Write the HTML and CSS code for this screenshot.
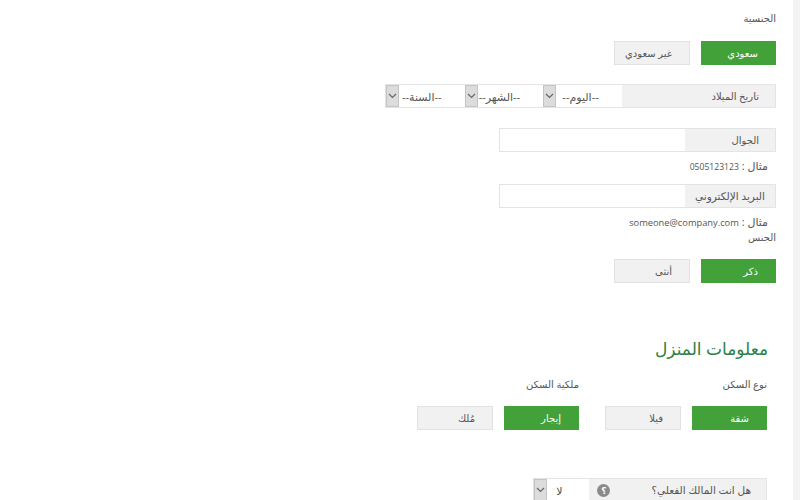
FILE: index.html
```html
<!DOCTYPE html>
<html lang="ar" dir="rtl">
<head>
  <meta charset="UTF-8" />
  <meta name="viewport" content="width=device-width, initial-scale=1.0" />
  <title>معلومات المنزل</title>
  <link rel="stylesheet" href="styles.css">
</head>
<body>

  <aside class="strip"></aside>

  <main class="page">
    <form class="personal">
      <p class="field-title nationality-title">الجنسية</p>
      <div class="toggle">
        <button type="button" class="btn active">سعودي</button>
        <button type="button" class="btn">غير سعودي</button>
      </div>

      <div class="row dob">
        <label class="row-label">تاريخ الميلاد</label>
        <div class="pick">
          <select><option>--اليوم--</option></select>
          <span class="arrow"><svg width="9" height="6" viewBox="0 0 9 6"><path d="M1 1l3.5 3.5L8 1" /></svg></span>
        </div>
        <div class="pick">
          <select><option>--الشهر--</option></select>
          <span class="arrow"><svg width="9" height="6" viewBox="0 0 9 6"><path d="M1 1l3.5 3.5L8 1" /></svg></span>
        </div>
        <div class="pick">
          <select><option>--السنة--</option></select>
          <span class="arrow"><svg width="9" height="6" viewBox="0 0 9 6"><path d="M1 1l3.5 3.5L8 1" /></svg></span>
        </div>
      </div>

      <div class="row contact">
        <label class="row-label" for="mobile">الجوال</label>
        <input type="text" id="mobile" />
      </div>
      <p class="hint">مثال : <span class="latin digits">0505123123</span></p>

      <div class="row contact email">
        <label class="row-label" for="email">البريد الإلكتروني</label>
        <input type="text" id="email" />
      </div>
      <p class="hint">مثال : <span class="latin">someone@company.com</span></p>

      <p class="field-title gender-title">الجنس</p>
      <div class="toggle">
        <button type="button" class="btn active">ذكر</button>
        <button type="button" class="btn">أنثى</button>
      </div>
    </form>

    <section class="house">
      <h2>معلومات المنزل</h2>
      <div class="house-groups">
        <div class="group">
          <p class="field-title">نوع السكن</p>
          <div class="toggle">
            <button type="button" class="btn active">شقة</button>
            <button type="button" class="btn">فيلا</button>
          </div>
        </div>
        <div class="group">
          <p class="field-title">ملكية السكن</p>
          <div class="toggle">
            <button type="button" class="btn active">إيجار</button>
            <button type="button" class="btn">مُلك</button>
          </div>
        </div>
      </div>

      <div class="row owner">
        <label class="row-label">
          هل انت المالك الفعلي؟
          <span class="help">؟</span>
        </label>
        <div class="pick">
          <select><option>لا</option></select>
          <span class="arrow"><svg width="9" height="6" viewBox="0 0 9 6"><path d="M1 1l3.5 3.5L8 1" /></svg></span>
        </div>
      </div>
    </section>
  </main>

</body>
</html>
```

FILE: styles.css
```css
* {
  margin: 0;
  padding: 0;
  box-sizing: border-box;
}

html, body {
  height: 500px;
  overflow: hidden;
}

body {
  display: flex;
  background: #ffffff;
  color: #555555;
  font-family: "Open Sans", "DejaVu Sans", sans-serif;
  font-size: 10px;
}

.strip {
  width: 7px;
  background: #f3f3f3;
}

.page {
  flex: 1;
  padding: 0 17px 0 0;
}

p {
  line-height: 14px;
}

.field-title {
  color: #555555;
}

.nationality-title {
  padding-top: 11px;
  margin-bottom: 16px;
}

.gender-title {
  padding-top: 1px;
  margin-bottom: 15px;
}

.toggle {
  display: flex;
  gap: 11px;
}

.btn {
  width: 76px;
  height: 24px;
  border: 1px solid #e2e2e2;
  background: #f1f1f1;
  color: #555555;
  font-family: inherit;
  font-size: 10px;
  text-align: right;
  padding-right: 17px;
  cursor: pointer;
}

.btn.active {
  width: 75px;
  background: #43a13a;
  border-color: #43a13a;
  color: #ffffff;
}

.row {
  display: flex;
  height: 24px;
  border: 1px solid #e4e4e4;
}

.row-label {
  display: flex;
  align-items: center;
  background: #f1f1f1;
  padding-right: 16px;
  color: #555555;
  font-size: 10px;
}

.dob {
  width: 391px;
  margin-top: 19px;
}

.dob .row-label {
  width: 154px;
}

.pick {
  display: flex;
  width: 79px;
  background: #ffffff;
}

.pick select {
  flex: 1;
  min-width: 0;
  border: none;
  appearance: none;
  background: #ffffff;
  color: #555555;
  font-family: inherit;
  font-size: 11px;
  padding-right: 23px;
}

.arrow {
  display: flex;
  align-items: center;
  justify-content: center;
  width: 13px;
  background: #dcdcdc;
  border: 1px solid #c4c4c4;
}

.arrow path {
  fill: none;
  stroke: #666666;
  stroke-width: 1.2;
}

.contact {
  width: 277px;
  margin-top: 20px;
}

.contact.email {
  margin-top: 11px;
}

.contact .row-label {
  width: 90px;
}

.contact input {
  flex: 1;
  min-width: 0;
  border: none;
  background: #ffffff;
}

.email .row-label {
  padding-right: 0;
  padding-left: 0;
  justify-content: center;
  font-size: 10.5px;
}

.hint {
  padding: 7px 8px 0 0;
  font-size: 11px;
}

.latin {
  font-size: 9.3px;
  line-height: 1;
}

.digits {
  font-size: 8.6px;
}

.house {
  margin-top: 53px;
  padding-right: 9px;
}

.house h2 {
  color: #2d8049;
  font-size: 17px;
  font-weight: normal;
  line-height: 26px;
  margin-right: -1px;
}

.house-groups {
  display: flex;
  gap: 26px;
  margin-top: 15px;
}

.group {
  width: 162px;
}

.group .field-title {
  margin-bottom: 15px;
}

.owner {
  width: 234px;
  margin-top: 48px;
}

.owner .row-label {
  width: 179px;
  gap: 41px;
  padding-right: 15px;
  font-size: 10.5px;
}

.owner .pick {
  width: 55px;
}

.owner .pick select {
  padding-right: 26px;
}

.help {
  display: flex;
  align-items: center;
  justify-content: center;
  width: 13px;
  height: 13px;
  border-radius: 50%;
  background: #8a8a8a;
  color: #ffffff;
  font-size: 9px;
  font-weight: bold;
}
```
